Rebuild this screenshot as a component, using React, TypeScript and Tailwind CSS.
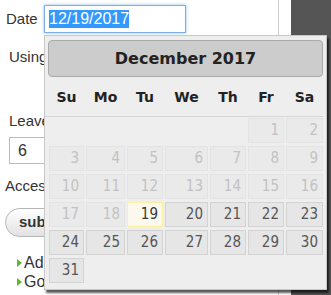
import React from "react";

type Kind = "empty" | "off" | "today" | "day";

const weekdays = ["Su", "Mo", "Tu", "We", "Th", "Fr", "Sa"];

// December 2017 starts on a Friday; anything before the 19th is disabled (minDate = today)
function buildRows(): { n: number | null; kind: Kind }[][] {
  const cells: { n: number | null; kind: Kind }[] = [];
  for (let i = 0; i < 5; i++) cells.push({ n: null, kind: "empty" });
  for (let d = 1; d <= 31; d++) {
    cells.push({ n: d, kind: d < 19 ? "off" : d === 19 ? "today" : "day" });
  }
  const rows = [];
  for (let i = 0; i < cells.length; i += 7) rows.push(cells.slice(i, i + 7));
  return rows;
}

function DayCell({ n, kind }: { n: number | null; kind: Kind }) {
  if (kind === "empty") return <div />;
  return (
    <div
      className={
        "flex h-[25px] items-center justify-end border pr-[4px] text-[15px] font-['DejaVu_Sans_Condensed','DejaVu_Sans',sans-serif] " +
        (kind === "off"
          ? "border-[#e3e3e3] bg-[#eaeaea] text-[#c2c2c2]"
          : kind === "today"
            ? "border-[#fcefa1] bg-[#fbf9ee] text-[#363636]"
            : "border-[#d3d3d3] bg-[#e6e6e6] text-[#555555]")
      }
    >
      {n}
    </div>
  );
}

function Bullet() {
  return (
    <svg width="5" height="8" viewBox="0 0 5 8" className="mr-[2px] shrink-0">
      <polygon points="0,0 5,4 0,8" fill="#5cb82d" />
    </svg>
  );
}

export default function App() {
  const rows = buildRows();
  return (
    <div className="relative flex h-[295px] w-[331px] overflow-hidden bg-white">
      {/* page form underneath the picker */}
      <div className="w-[279px] shrink-0 border-r border-[#cccccc] font-['Liberation_Sans',Arial,sans-serif] text-[15px] text-[#333333]">
        <div className="flex h-[33px] items-center pt-[5px]">
          <span className="w-[44px] pl-[6px] leading-[20px]">Date</span>
          <div className="flex h-[28px] w-[142px] items-center border border-[#7eaee3] bg-white pl-[4px] shadow-[0_0_3px_#8cbcf0]">
            <span className="bg-[#3399ff] text-[16px] leading-[18px] text-white">12/19/2017</span>
          </div>
        </div>
        <p className="mt-[14px] pl-[9px] leading-[20px]">Using transit</p>
        <p className="mt-[44px] pl-[9px] leading-[20px]">Leave after</p>
        <div className="ml-[9px] mt-[6px] flex h-[27px] w-[150px] items-center border border-[#bbbbbb] pl-[8px] text-[16px]">
          6
        </div>
        <p className="mt-[12px] pl-[5px] leading-[20px]">Accessible</p>
        <button className="ml-[5px] mt-[12px] h-[29px] rounded-full border border-[#b5b5b5] bg-gradient-to-b from-white to-[#e2e2e2] px-[13px] text-[15px] font-bold text-[#333333]">
          submit
        </button>
        <div className="mt-[16px] flex flex-col pl-[17px] text-[16px] leading-[19px]">
          <span className="flex items-center">
            <Bullet />
            Add trip
          </span>
          <span className="flex items-center">
            <Bullet />
            Go back
          </span>
        </div>
      </div>
      <div className="w-[12px] shrink-0" />
      <div className="flex-1 bg-[#555555]" />

      {/* datepicker popup */}
      <div className="absolute left-[44px] top-[35px] h-[255px] w-[283px] border border-[#c8c8c8] bg-[#eeeeee] px-[3px] pt-[4px] shadow-[2px_3px_2px_rgba(0,0,0,0.65)]">
        <div className="flex h-[37px] items-center justify-center rounded-[4px] border border-[#aaaaaa] bg-[#cccccc] font-['DejaVu_Sans',sans-serif] text-[16px] font-bold text-[#222222]">
          December 2017
        </div>
        <div className="-ml-[3px] flex h-[40px] w-[278px] items-center border-b border-[#d6d6d6] pl-[4px] pt-[2px]">
          <div className="grid grid-cols-[35px_39px_36px_43px_36px_36px_37px] gap-x-[2px] font-['DejaVu_Sans',sans-serif] text-[14px] font-bold text-[#222222]">
            {weekdays.map((w) => (
              <span key={w} className="text-center">
                {w}
              </span>
            ))}
          </div>
        </div>
        <div className="ml-[1px] mt-[1px] grid grid-cols-[35px_39px_36px_43px_36px_36px_37px] gap-x-[2px] gap-y-[3px]">
          {rows.map((row, r) =>
            row.map((c, i) => <DayCell key={`${r}-${i}`} n={c.n} kind={c.kind} />),
          )}
        </div>
      </div>
    </div>
  );
}
